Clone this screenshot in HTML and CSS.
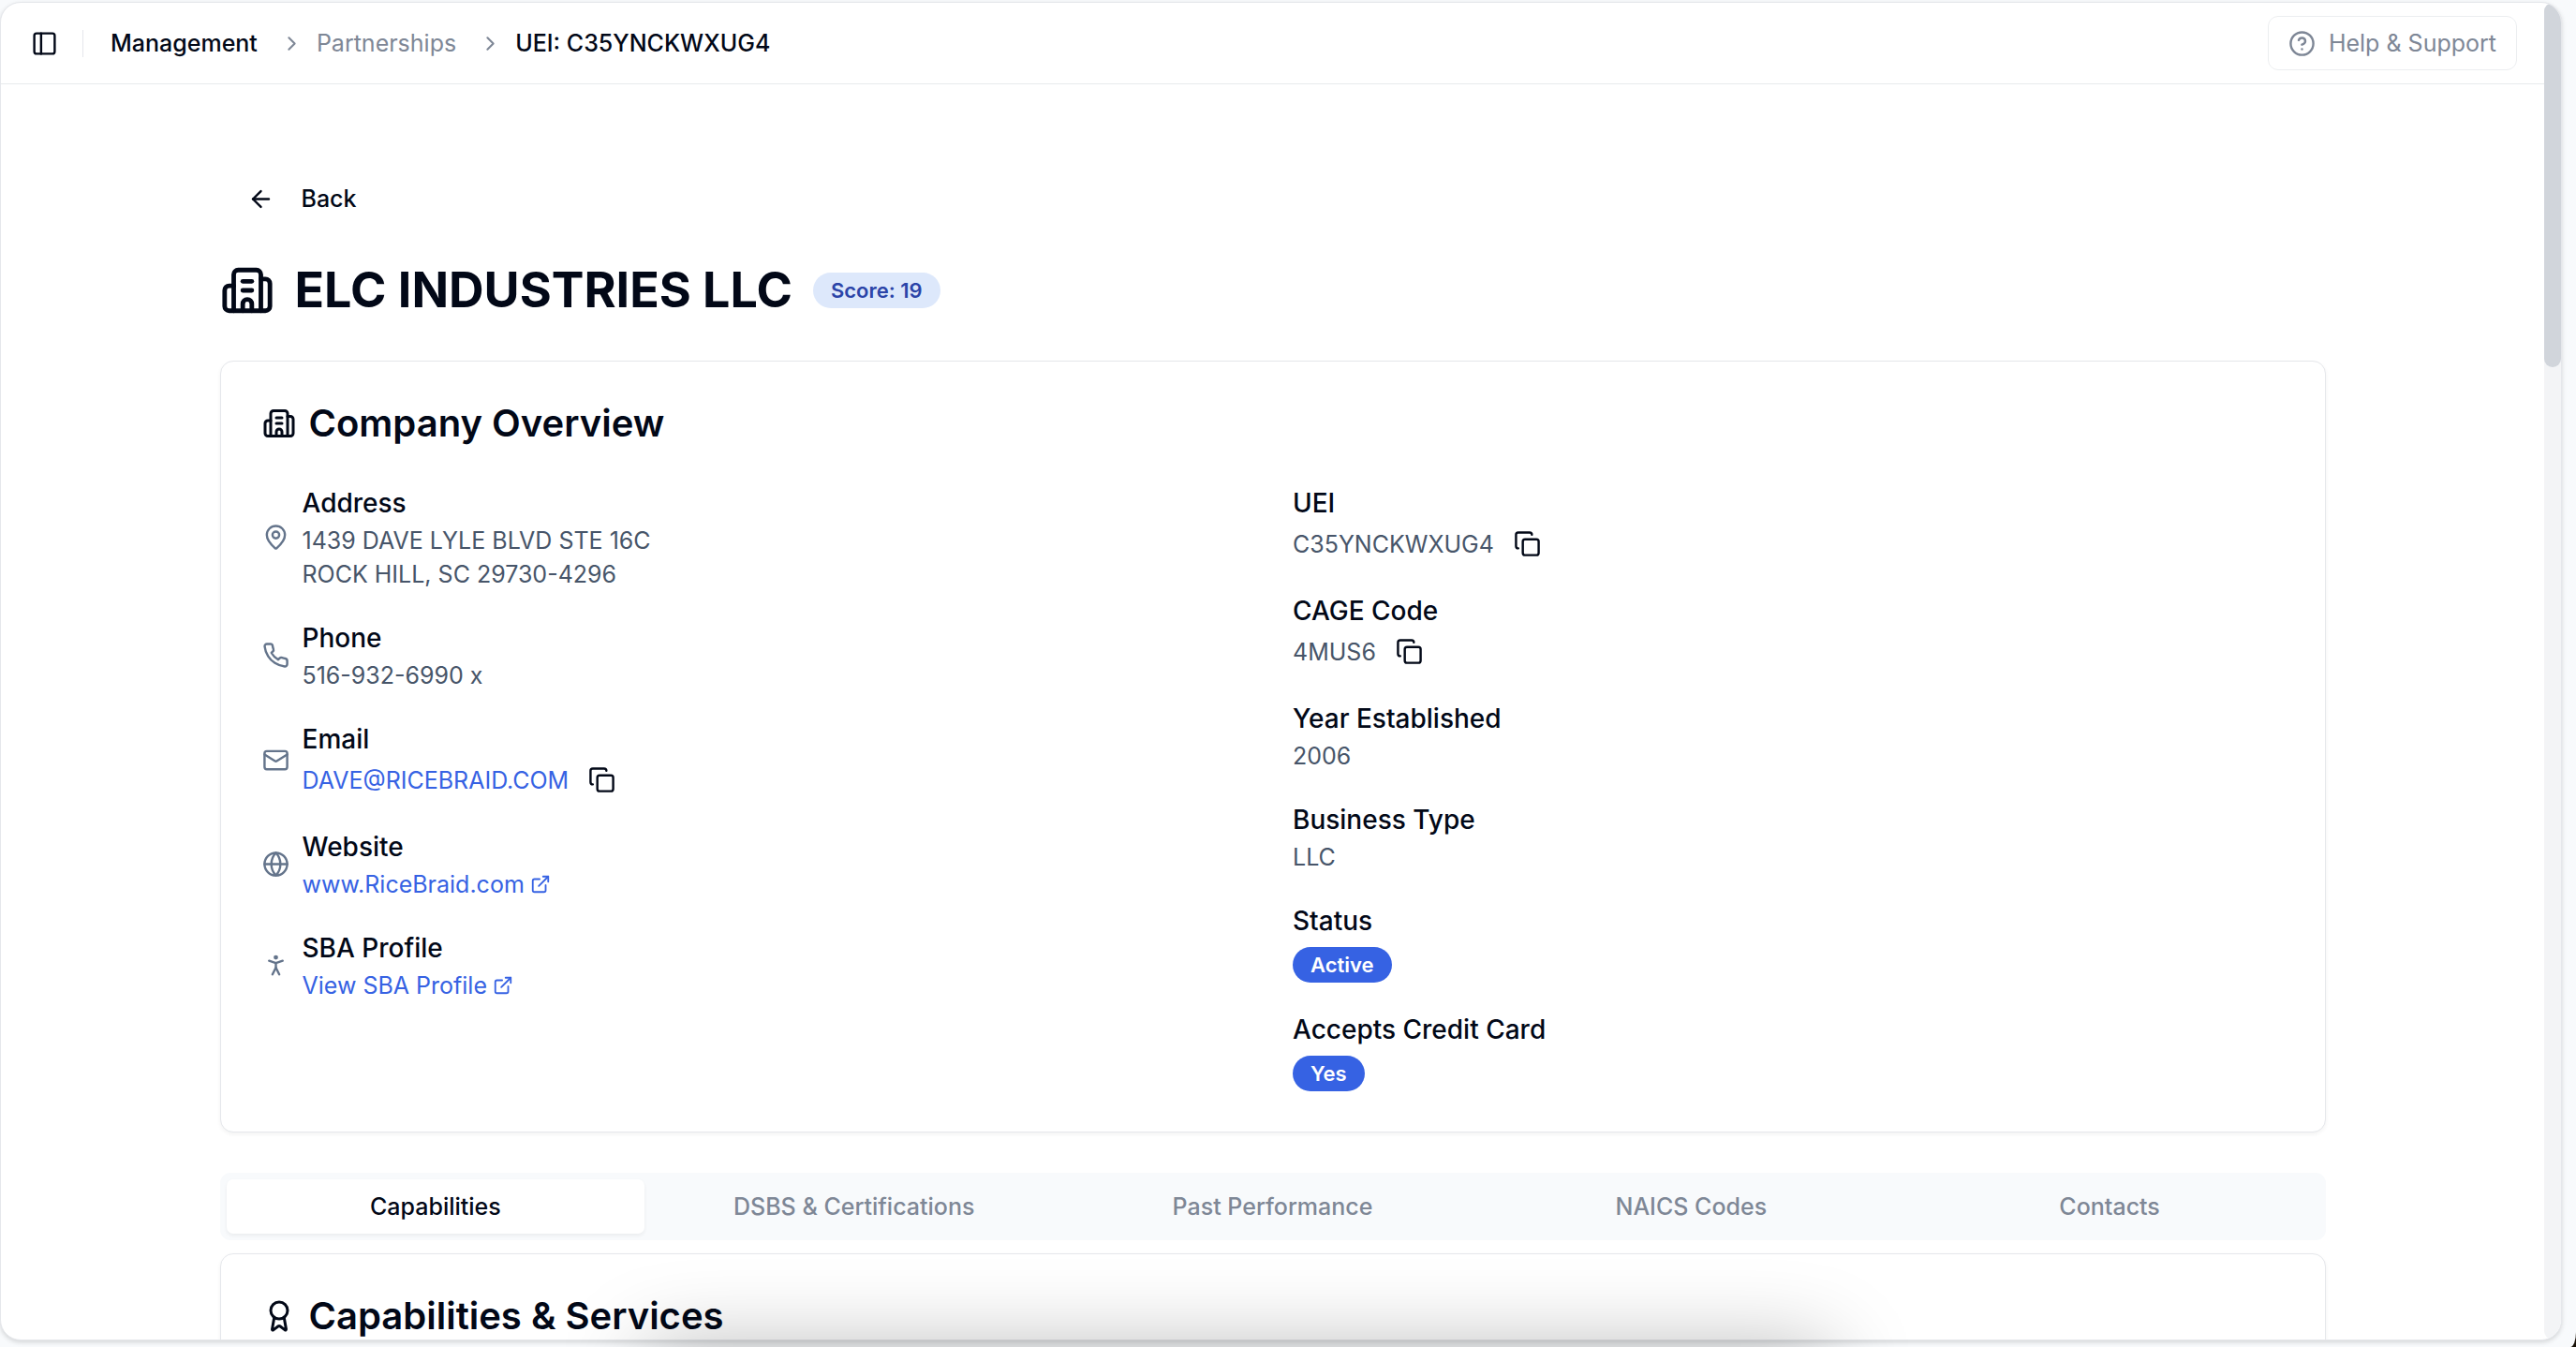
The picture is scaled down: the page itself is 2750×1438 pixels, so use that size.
FILE: index.html
```html
<!DOCTYPE html>
<html lang="en">
<head>
  <meta charset="UTF-8">
  <meta name="viewport" content="width=device-width, initial-scale=1.0">
  <title>ELC INDUSTRIES LLC</title>
  <link rel="stylesheet" href="styles.css">
</head>
<body>
  <!-- Icons -->
  <svg class="sprite" aria-hidden="true">
    <symbol id="building" viewBox="0 0 24 24">
      <path d="M10 12h4"/><path d="M10 8h4"/><path d="M14 21v-3a2 2 0 0 0-4 0v3"/>
      <path d="M6 10H4a2 2 0 0 0-2 2v7a2 2 0 0 0 2 2h16a2 2 0 0 0 2-2V9a2 2 0 0 0-2-2h-2"/>
      <path d="M6 21V5a2 2 0 0 1 2-2h8a2 2 0 0 1 2 2v16"/>
    </symbol>
    <symbol id="chevron" viewBox="0 0 24 24"><path d="m9 18 6-6-6-6"/></symbol>
    <symbol id="copy" viewBox="0 0 24 24">
      <rect width="14" height="14" x="8" y="8" rx="2" ry="2"/>
      <path d="M4 16c-1.1 0-2-.9-2-2V4c0-1.1.9-2 2-2h10c1.1 0 2 .9 2 2"/>
    </symbol>
    <symbol id="external" viewBox="0 0 24 24">
      <path d="M15 3h6v6"/><path d="M10 14 21 3"/>
      <path d="M18 13v6a2 2 0 0 1-2 2H5a2 2 0 0 1-2-2V8a2 2 0 0 1 2-2h6"/>
    </symbol>
  </svg>

  <div class="inset">
    <div class="scroll-area">
      <header class="topbar">
        <button class="sidebar-toggle" type="button" aria-label="Toggle sidebar">
          <svg class="icon" viewBox="0 0 24 24"><rect width="18" height="18" x="3" y="3" rx="2"/><path d="M9 3v18"/></svg>
        </button>
        <span class="separator"></span>
        <nav class="breadcrumb">
          <a class="current" href="#">Management</a>
          <svg class="icon chevron"><use href="#chevron"/></svg>
          <a href="#">Partnerships</a>
          <svg class="icon chevron"><use href="#chevron"/></svg>
          <span class="current">UEI: C35YNCKWXUG4</span>
        </nav>
        <button class="help" type="button">
          <svg class="icon" viewBox="0 0 24 24"><circle cx="12" cy="12" r="10"/><path d="M9.09 9a3 3 0 0 1 5.83 1c0 2-3 3-3 3"/><path d="M12 17h.01"/></svg>
          Help &amp; Support
        </button>
      </header>

      <main class="container">
        <button class="back" type="button">
          <svg class="icon" viewBox="0 0 24 24"><path d="m12 19-7-7 7-7"/><path d="M19 12H5"/></svg>
          Back
        </button>

        <div class="title-row">
          <svg class="icon icon-xl"><use href="#building"/></svg>
          <h1>ELC INDUSTRIES LLC</h1>
          <span class="badge badge-score">Score: 19</span>
        </div>

        <section class="card">
          <h2><svg class="icon icon-lg"><use href="#building"/></svg>Company Overview</h2>
          <div class="overview">
            <div class="column">
              <div class="item">
                <svg class="icon muted" viewBox="0 0 24 24"><path d="M20 10c0 4.993-5.539 10.193-7.399 11.799a1 1 0 0 1-1.202 0C9.539 20.193 4 14.993 4 10a8 8 0 0 1 16 0"/><circle cx="12" cy="10" r="3"/></svg>
                <div>
                  <p class="label">Address</p>
                  <p class="value">1439 DAVE LYLE BLVD STE 16C<br>ROCK HILL, SC 29730-4296</p>
                </div>
              </div>
              <div class="item">
                <svg class="icon muted" viewBox="0 0 24 24"><path d="M22 16.92v3a2 2 0 0 1-2.18 2 19.79 19.79 0 0 1-8.63-3.07 19.5 19.5 0 0 1-6-6 19.79 19.79 0 0 1-3.07-8.67A2 2 0 0 1 4.11 2h3a2 2 0 0 1 2 1.72 12.84 12.84 0 0 0 .7 2.81 2 2 0 0 1-.45 2.11L8.09 9.91a16 16 0 0 0 6 6l1.27-1.27a2 2 0 0 1 2.11-.45 12.84 12.84 0 0 0 2.81.7A2 2 0 0 1 22 16.92z"/></svg>
                <div>
                  <p class="label">Phone</p>
                  <p class="value">516-932-6990 x</p>
                </div>
              </div>
              <div class="item">
                <svg class="icon muted" viewBox="0 0 24 24"><rect width="20" height="16" x="2" y="4" rx="2"/><path d="m22 7-8.97 5.7a1.94 1.94 0 0 1-2.06 0L2 7"/></svg>
                <div>
                  <p class="label">Email</p>
                  <div class="copy-row">
                    <a class="link" href="mailto:DAVE@RICEBRAID.COM">DAVE@RICEBRAID.COM</a>
                    <button class="copy" type="button" aria-label="Copy email"><svg class="icon"><use href="#copy"/></svg></button>
                  </div>
                </div>
              </div>
              <div class="item">
                <svg class="icon muted" viewBox="0 0 24 24"><circle cx="12" cy="12" r="10"/><path d="M12 2a14.5 14.5 0 0 0 0 20 14.5 14.5 0 0 0 0-20"/><path d="M2 12h20"/></svg>
                <div>
                  <p class="label">Website</p>
                  <a class="link" href="#">www.RiceBraid.com<svg class="icon icon-sm"><use href="#external"/></svg></a>
                </div>
              </div>
              <div class="item">
                <svg class="icon muted" viewBox="0 0 24 24"><circle cx="12" cy="5" r="1"/><path d="m9 20 3-6 3 6"/><path d="m6 8 6 2 6-2"/><path d="M12 10v4"/></svg>
                <div>
                  <p class="label">SBA Profile</p>
                  <a class="link" href="#">View SBA Profile<svg class="icon icon-sm"><use href="#external"/></svg></a>
                </div>
              </div>
            </div>

            <div class="column">
              <div>
                <p class="label">UEI</p>
                <div class="copy-row">
                  <p class="value">C35YNCKWXUG4</p>
                  <button class="copy" type="button" aria-label="Copy UEI"><svg class="icon"><use href="#copy"/></svg></button>
                </div>
              </div>
              <div>
                <p class="label">CAGE Code</p>
                <div class="copy-row">
                  <p class="value">4MUS6</p>
                  <button class="copy" type="button" aria-label="Copy CAGE code"><svg class="icon"><use href="#copy"/></svg></button>
                </div>
              </div>
              <div>
                <p class="label">Year Established</p>
                <p class="value">2006</p>
              </div>
              <div>
                <p class="label">Business Type</p>
                <p class="value">LLC</p>
              </div>
              <div class="badge-item">
                <p class="label">Status</p>
                <span class="badge">Active</span>
              </div>
              <div class="badge-item">
                <p class="label">Accepts Credit Card</p>
                <span class="badge">Yes</span>
              </div>
            </div>
          </div>
        </section>

        <div class="tabs" role="tablist">
          <button class="tab active" type="button" role="tab" aria-selected="true">Capabilities</button>
          <button class="tab" type="button" role="tab">DSBS &amp; Certifications</button>
          <button class="tab" type="button" role="tab">Past Performance</button>
          <button class="tab" type="button" role="tab">NAICS Codes</button>
          <button class="tab" type="button" role="tab">Contacts</button>
        </div>

        <section class="card">
          <h2>
            <svg class="icon icon-lg" viewBox="0 0 24 24"><path d="m15.477 12.89 1.515 8.526a.5.5 0 0 1-.81.47l-3.58-2.687a1 1 0 0 0-1.197 0l-3.586 2.686a.5.5 0 0 1-.81-.469l1.514-8.526"/><circle cx="12" cy="8" r="6"/></svg>
            Capabilities &amp; Services
          </h2>
        </section>
      </main>
    </div>
    <div class="scrollbar"><div class="thumb"></div></div>
  </div>
  <div class="dock-shadow"></div>
</body>
</html>
```
FILE: styles.css
```css
* {
  box-sizing: border-box;
}

html {
  background-color: #1a1208;
}

body {
  position: relative;
  margin: 0;
  height: 100vh;
  padding: 2px 15px 7px 0;
  overflow: hidden;
  background-color: #f8fafc;
  border-bottom-right-radius: 6px 16px;
  color: #020817;
  font-family: Inter, "Liberation Sans", sans-serif;
  font-size: 25px;
  line-height: 36px;
}

h1, h2, p {
  margin: 0;
}

a {
  color: inherit;
  text-decoration: none;
}

button {
  padding: 0;
  border: none;
  background: none;
  color: inherit;
  font: inherit;
  cursor: pointer;
}

.sprite {
  display: none;
}

.icon {
  width: 29px;
  height: 29px;
  flex-shrink: 0;
  fill: none;
  stroke: currentColor;
  stroke-width: 2;
  stroke-linecap: round;
  stroke-linejoin: round;
}

.icon-sm {
  width: 22px;
  height: 22px;
}

.icon-lg {
  width: 36px;
  height: 36px;
}

.icon-xl {
  width: 58px;
  height: 58px;
}

.muted {
  color: #64748b;
}

.inset {
  display: flex;
  height: 100%;
  overflow: hidden;
  background-color: #fff;
  border: 1px solid #e5e7eb;
  border-radius: 22px;
  box-shadow: 0 2px 5px rgba(0, 0, 0, 0.15);
}

.scroll-area {
  flex: 1;
  min-width: 0;
  overflow: hidden;
}

.scrollbar {
  width: 18px;
  background-color: #f3f4f6;
  border-radius: 9px;
}

.thumb {
  height: 389px;
  background-color: #d1d5db;
  border-radius: 9px;
}

/* Top bar */
.topbar {
  display: flex;
  align-items: center;
  height: 87px;
  padding: 0 29px 0 32px;
  border-bottom: 1px solid #e8eaed;
}

.sidebar-toggle {
  display: flex;
}

.separator {
  width: 1px;
  height: 29px;
  margin: 0 29px 0 26px;
  background-color: #e5e7eb;
}

.breadcrumb {
  display: flex;
  align-items: center;
  gap: 14px;
  color: #7e8796;
}

.breadcrumb a {
  padding-right: 10px;
}

.breadcrumb .current {
  color: #020817;
  font-weight: 500;
}

.chevron {
  width: 25px;
  height: 25px;
}

.help {
  display: flex;
  align-items: center;
  gap: 14px;
  height: 58px;
  margin-left: auto;
  padding: 0 21px;
  border: 1px solid #eceef0;
  border-radius: 11px;
  color: #7e8796;
}

/* Page content */
.container {
  max-width: 2306px;
  margin: 0 auto;
  padding: 86px 29px;
}

.back {
  display: flex;
  align-items: center;
  gap: 29px;
  height: 72px;
  margin-bottom: 29px;
  padding: 0 29px;
  font-weight: 500;
}

.title-row {
  display: flex;
  align-items: center;
  gap: 22px;
  margin-bottom: 43px;
}

h1 {
  font-size: 52px;
  line-height: 65px;
  font-weight: 700;
}

.badge {
  display: inline-flex;
  align-items: center;
  height: 38px;
  padding: 0 19px;
  border-radius: 19px;
  background-color: #3662e3;
  color: #fff;
  font-size: 22px;
  font-weight: 600;
}

.badge-score {
  background-color: #dde8fb;
  color: #2b44a8;
}

.card {
  padding: 44px 44px 43px;
  background-color: #fff;
  border: 1px solid #e5e7eb;
  border-radius: 14px;
  box-shadow: 0 2px 4px rgba(0, 0, 0, 0.05);
}

h2 {
  display: flex;
  align-items: center;
  gap: 14px;
  margin-bottom: 43px;
  font-size: 40px;
  line-height: 43px;
  font-weight: 600;
}

.overview {
  display: grid;
  grid-template-columns: 1fr 1fr;
  gap: 43px;
}

.column {
  display: flex;
  flex-direction: column;
  gap: 29px;
}

.item {
  display: flex;
  align-items: center;
  gap: 14px;
}

.label {
  font-size: 28px;
  line-height: 43px;
  font-weight: 500;
}

.value {
  color: #475569;
}

.link {
  display: flex;
  align-items: center;
  gap: 6px;
  color: #3662e3;
}

.copy-row {
  display: flex;
  align-items: center;
  gap: 14px;
}

.copy {
  display: flex;
  align-items: center;
  justify-content: center;
  width: 43px;
  height: 43px;
}

.badge-item {
  display: flex;
  flex-direction: column;
  align-items: flex-start;
  gap: 6px;
}

/* Tabs */
.tabs {
  display: grid;
  grid-template-columns: repeat(5, 1fr);
  margin: 43px 0 14px;
  padding: 7px;
  border-radius: 11px;
  background-color: #f8fafc;
  color: #7e8796;
}

.tab {
  height: 58px;
  border-radius: 7px;
  font-weight: 500;
}

.tab.active {
  background-color: #fff;
  color: #020817;
  box-shadow: 0 2px 4px rgba(0, 0, 0, 0.06);
}

/* Soft shadow rising from the bottom edge of the window */
.dock-shadow {
  position: absolute;
  top: 100%;
  left: 25%;
  right: 29%;
  height: 100px;
  box-shadow: 0 0 90px rgba(0, 0, 0, 0.28);
}
```
